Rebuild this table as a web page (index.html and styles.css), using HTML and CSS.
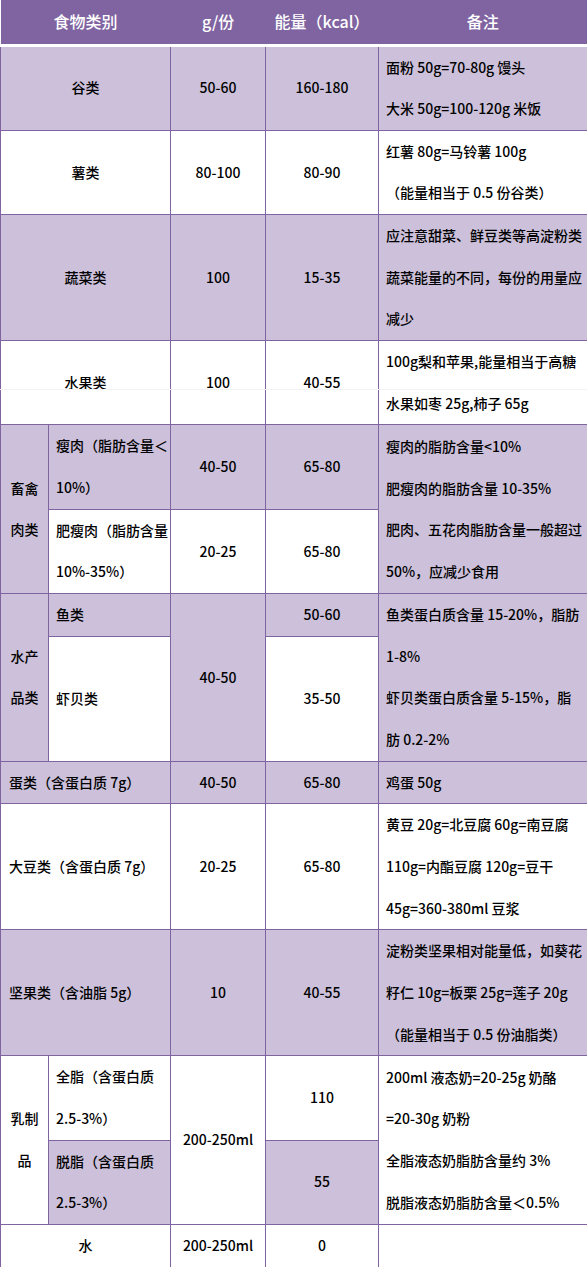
FILE: index.html
```html
<!DOCTYPE html>
<html lang="zh-CN">
<head>
<meta charset="utf-8">
<title>食物交换份</title>
<link rel="stylesheet" href="styles.css">
</head>
<body>
<div class="sheet">
<table class="food">
  <colgroup>
    <col class="c-sub"><col class="c-name"><col class="c-g"><col class="c-kcal"><col class="c-note">
  </colgroup>
  <thead>
    <tr>
      <th colspan="2">食物类别</th>
      <th>g/份</th>
      <th>能量（kcal）</th>
      <th class="th-last">备注</th>
    </tr>
  </thead>
  <tbody>
    <tr class="lav">
      <td colspan="2">谷类</td>
      <td>50-60</td>
      <td>160-180</td>
      <td class="note">面粉 50g=70-80g 馒头<br>大米 50g=100-120g 米饭</td>
    </tr>
    <tr>
      <td colspan="2">薯类</td>
      <td>80-100</td>
      <td>80-90</td>
      <td class="note">红薯 80g=马铃薯 100g<br>（能量相当于 0.5 份谷类）</td>
    </tr>
    <tr class="lav">
      <td colspan="2">蔬菜类</td>
      <td>100</td>
      <td>15-35</td>
      <td class="note">应注意甜菜、鲜豆类等高淀粉类<br>蔬菜能量的不同，每份的用量应<br>减少</td>
    </tr>
    <tr>
      <td colspan="2">水果类</td>
      <td>100</td>
      <td>40-55</td>
      <td class="note">100g梨和苹果,能量相当于高糖<br>水果如枣 25g,柿子 65g</td>
    </tr>
    <tr>
      <td rowspan="2" class="bg-lav">畜禽<br>肉类</td>
      <td class="sub bg-lav">瘦肉（脂肪含量＜<br>10%）</td>
      <td class="bg-lav">40-50</td>
      <td class="bg-lav">65-80</td>
      <td rowspan="2" class="note bg-lav">瘦肉的脂肪含量&lt;10%<br>肥瘦肉的脂肪含量 10-35%<br>肥肉、五花肉脂肪含量一般超过<br>50%，应减少食用</td>
    </tr>
    <tr>
      <td class="sub">肥瘦肉（脂肪含量<br>10%-35%）</td>
      <td>20-25</td>
      <td>65-80</td>
    </tr>
    <tr>
      <td rowspan="2" class="bg-lav">水产<br>品类</td>
      <td class="sub bg-lav">鱼类</td>
      <td rowspan="2" class="bg-lav">40-50</td>
      <td class="bg-lav">50-60</td>
      <td rowspan="2" class="note bg-lav">鱼类蛋白质含量 15-20%，脂肪<br>1-8%<br>虾贝类蛋白质含量 5-15%，脂<br>肪 0.2-2%</td>
    </tr>
    <tr class="tall">
      <td class="sub">虾贝类</td>
      <td>35-50</td>
    </tr>
    <tr class="lav">
      <td colspan="2" class="label-left">蛋类（含蛋白质 7g）</td>
      <td>40-50</td>
      <td>65-80</td>
      <td class="note">鸡蛋 50g</td>
    </tr>
    <tr>
      <td colspan="2" class="label-left">大豆类（含蛋白质 7g）</td>
      <td>20-25</td>
      <td>65-80</td>
      <td class="note">黄豆 20g=北豆腐 60g=南豆腐<br>110g=内酯豆腐 120g=豆干<br>45g=360-380ml 豆浆</td>
    </tr>
    <tr class="lav">
      <td colspan="2" class="label-left">坚果类（含油脂 5g）</td>
      <td>10</td>
      <td>40-55</td>
      <td class="note">淀粉类坚果相对能量低，如葵花<br>籽仁 10g=板栗 25g=莲子 20g<br>（能量相当于 0.5 份油脂类）</td>
    </tr>
    <tr>
      <td rowspan="2">乳制<br>品</td>
      <td class="sub">全脂（含蛋白质<br>2.5-3%）</td>
      <td rowspan="2">200-250ml</td>
      <td>110</td>
      <td rowspan="2" class="note">200ml 液态奶=20-25g 奶酪<br>=20-30g 奶粉<br>全脂液态奶脂肪含量约 3%<br>脱脂液态奶脂肪含量＜0.5%</td>
    </tr>
    <tr>
      <td class="sub bg-lav">脱脂（含蛋白质<br>2.5-3%）</td>
      <td class="bg-lav">55</td>
    </tr>
    <tr>
      <td colspan="2">水</td>
      <td>200-250ml</td>
      <td>0</td>
      <td class="note"></td>
    </tr>
  </tbody>
</table>
<div class="seam"></div>
</div>
</body>
</html>
```
FILE: styles.css
```css
* {
  box-sizing: border-box;
}

html,
body {
  margin: 0;
  padding: 0;
  background: #ffffff;
}

.sheet {
  position: relative;
  width: 587px;
}

.food {
  width: 587px;
  border-collapse: collapse;
  table-layout: fixed;
  font-family: "Noto Sans CJK SC", "Noto Sans", sans-serif;
  font-size: 14px;
  font-weight: 500;
  color: #000000;
}

.c-sub { width: 48px; }
.c-name { width: 122px; }
.c-g { width: 95px; }
.c-kcal { width: 113px; }
.c-note { width: 209px; }

.food th {
  height: 45px;
  padding: 0 0 1px;
  background: #8064a2;
  color: #ffffff;
  font-size: 16px;
  font-weight: 500;
  text-align: center;
  vertical-align: middle;
  border: none;
  border-bottom: 3px solid #ffffff;
  white-space: nowrap;
}

.food th.th-last {
  border-right: 1px solid #8064a2;
}

.food td {
  border: 1px solid #8064a2;
  padding: 0 6px;
  line-height: 41.65px;
  text-align: center;
  vertical-align: middle;
  white-space: nowrap;
}

.food tr.lav td,
.food td.bg-lav {
  background: #ccc0da;
}

.food td.note,
.food td.sub {
  text-align: left;
  padding-left: 7px;
}

.food td.label-left {
  text-align: left;
  padding-left: 8px;
}

.food tr.tall {
  height: 125px;
}

.seam {
  position: absolute;
  left: 0;
  right: 0;
  top: 389px;
  height: 1px;
  background: #f3f3f3;
}
```
